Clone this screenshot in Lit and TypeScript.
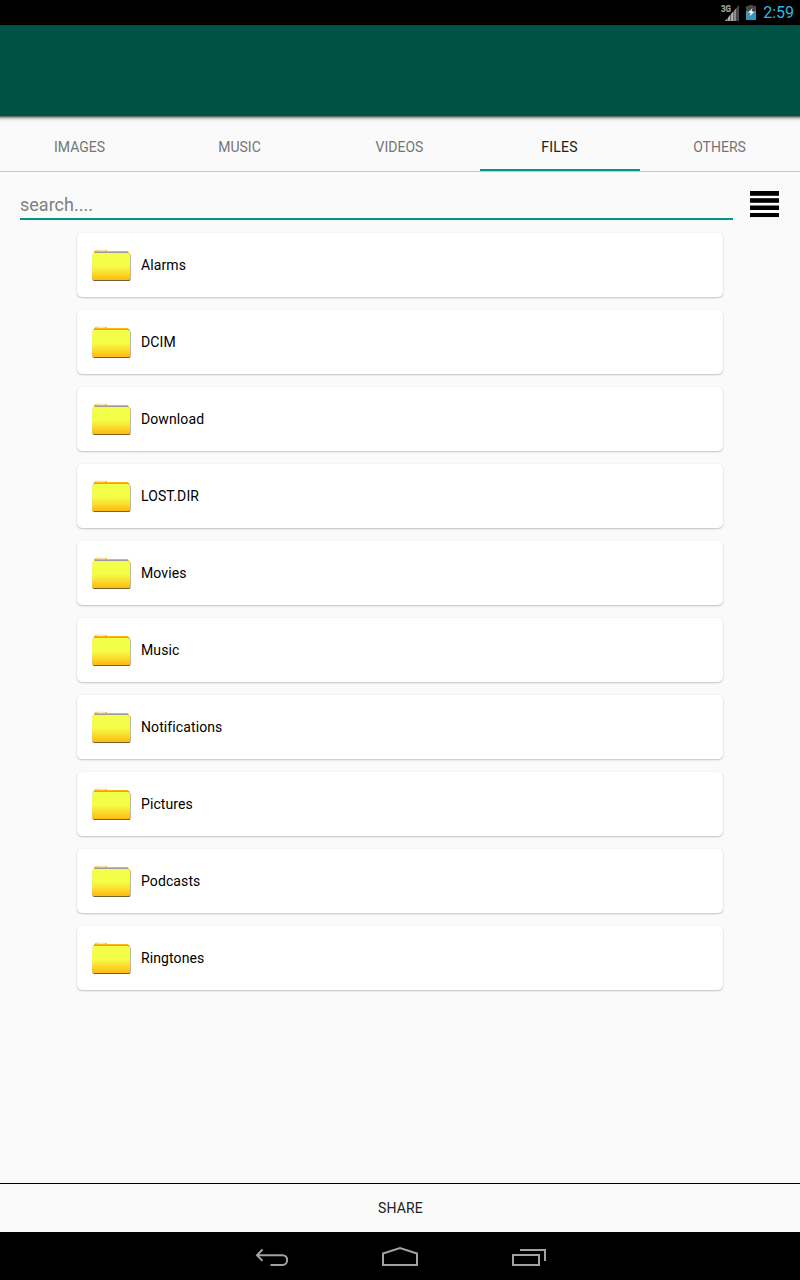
import { LitElement, html, css, svg } from "lit";
import { customElement, property, state } from "lit/decorators.js";

@customElement("folder-card")
class FolderCard extends LitElement {
  @property() name = "";
  @property({ type: Boolean }) warm = false;

  static styles = css`
    :host { display: block; }
    .card {
      display: flex; align-items: center; box-sizing: border-box;
      height: 64px; padding-left: 15px; border-radius: 5px; background: #fff;
      box-shadow: 0 1px 2px rgba(0, 0, 0, 0.22), 0 0 1px rgba(0, 0, 0, 0.1);
    }
    svg { display: block; flex: none; width: 40px; height: 34px; margin-top: 2px; }
    .name { margin-left: 9px; font-size: 14px; line-height: 20px; letter-spacing: 0.1px; color: #000; }
  `;

  render() {
    return html`<div class="card">
      <svg viewBox="0 0 40 34">
        <defs>
          <linearGradient id="body" x1="0" y1="0" x2="0" y2="1">
            <stop offset="0" stop-color="#f2ff48" />
            <stop offset="0.48" stop-color="#f4fd48" />
            <stop offset="0.72" stop-color="#fbe030" />
            <stop offset="1" stop-color="#ffb90f" />
          </linearGradient>
        </defs>
        <path d="M3 2V1h2V0.4h8V1h2v1z" fill="#fae8b4" />
        <path d="M3 1h2v1H3zM13 1h2v1h-2z" fill="#fbc33a" />
        <path d="M2 4V2h34l1 2z" fill="#fdb515" />
        ${this.warm
          ? svg`<path d="M2 3h35l1 1H1z" fill="#dfa03a" />`
          : svg`<path d="M3 3h33v1H3z" fill="#9c9a9c" />`}
        <path d="M2 4h35l2 2v24l-1 2H2l-2-1V6z" fill="#b9b6bd" />
        <path d="M1 30h37v1l-1 1H2l-1-1z" fill="#77622e" />
        <path d="M2 4h34l2 2v24l-1 1H1l-1-1V6z" fill="url(#body)" />
      </svg>
      <span class="name">${this.name}</span>
    </div>`;
  }
}

@customElement("app-root")
class AppRoot extends LitElement {
  @state() active = "FILES";
  tabs = ["IMAGES", "MUSIC", "VIDEOS", "FILES", "OTHERS"];
  folders = ["Alarms", "DCIM", "Download", "LOST.DIR", "Movies", "Music", "Notifications", "Pictures", "Podcasts", "Ringtones"];

  static styles = css`
    :host {
      display: flex; flex-direction: column; width: 800px; height: 1280px;
      overflow: hidden; background: #fafafa; font-family: Roboto, sans-serif;
    }
    svg { display: block; flex: none; }
    .status {
      display: flex; justify-content: flex-end; align-items: center; flex: none;
      height: 25px; box-sizing: border-box; padding-right: 6px; background: #000;
    }
    .battery { margin-left: 6px; }
    .clock { margin-left: 6px; font-size: 16px; line-height: 25px; color: #33b5e5; }
    .toolbar { flex: none; height: 91px; background: #005344; }
    .shade {
      flex: none; height: 6px;
      background: linear-gradient(#5f6f6b 0 1px, #9da5a3 1px 2px, #c9cccb 2px 3px, #e2e4e3 3px 4px, #f1f2f1 4px 5px, #f8f8f8 5px);
    }
    .tabs { display: flex; flex: none; height: 49px; border-bottom: 1px solid #c8c8c8; }
    .tab {
      flex: 1; box-sizing: border-box; height: 49px; padding-top: 15px;
      text-align: center; font-size: 14px; line-height: 20px; color: #757575;
      border-bottom: 2px solid transparent; padding-right: 1px;
    }
    .tab.on { color: #212121; border-bottom-color: #009688; letter-spacing: 0.25px; }
    .search { display: flex; flex: none; height: 61px; padding-left: 20px; }
    .field {
      box-sizing: border-box; width: 713px; height: 48px; padding-top: 21px;
      border-bottom: 2px solid #009688; font-size: 18px; line-height: 24px; color: #808080;
    }
    .lines { margin: 19px 0 0 17px; }
    .list { display: flex; flex-direction: column; gap: 13px; flex: 1; padding: 0 77px; }
    .share {
      flex: none; height: 48px; border-top: 1px solid #000; text-align: center;
      font-size: 14px; line-height: 49px; color: #212121; padding-left: 1px; letter-spacing: 0.15px;
    }
    .nav { display: flex; flex: none; height: 48px; justify-content: center; background: #000; }
  `;

  render() {
    return html`
      <div class="status">
        <svg width="20" height="18" viewBox="0 0 20 18">
          <text x="1" y="7.500" font-size="8.5" font-weight="700" textLength="10" lengthAdjust="spacingAndGlyphs" fill="#a8a8a8" stroke="#a8a8a8" stroke-width="0.2">3G</text>
          <path d="M19 1V17H5z" fill="#484848" />
          <path d="M5 17l2.300-2.600V17zM8 17v-3.500l2.300-2.600V17zM11 17v-7l2.300-2.600V17z" fill="#adadad" />
          <path d="M14 17V6.700l2-2.300V17z" fill="#8c8c8c" />
        </svg>
        <svg class="battery" width="11" height="17" viewBox="0 0 11 17">
          <path d="M3 1h4v1h3v5H0V2h3z" fill="#484848" />
          <path d="M0 7h10v9H0z" fill="#3595bb" />
          <path d="M6.500 4L2.300 8.500l2.500.6L3.500 12.500 7.900 8 5.500 7.300z" fill="#fff" />
        </svg>
        <span class="clock">2:59</span>
      </div>
      <div class="toolbar"></div>
      <div class="shade"></div>
      <div class="tabs">
        ${this.tabs.map((t) => html`<div class="tab ${t === this.active ? "on" : ""}" @click=${() => (this.active = t)}>${t}</div>`)}
      </div>
      <div class="search">
        <div class="field">search....</div>
        <svg class="lines" width="29" height="27" viewBox="0 0 29 27">
          <path d="M0 0h29v4H0zM0 8h29v3H0zM0 15h29v3H0zM0 22h29v4H0z" fill="#000" />
          <path d="M0 4h29v1H0zM0 7h29v1H0zM0 11h29v1H0z" fill="#333" />
          <path d="M0 14h29v1H0z" fill="#808080" />
          <path d="M0 18h29v1H0z" fill="#000" />
          <path d="M0 26h29v1H0z" fill="#eee" />
        </svg>
      </div>
      <div class="list">
        ${this.folders.map((f, i) => html`<folder-card .name=${f} .warm=${i % 2 === 1}></folder-card>`)}
      </div>
      <div class="share">SHARE</div>
      <div class="nav">
        <svg width="300" height="48" viewBox="250 1232 300 48" fill="none" stroke="#a2a2a2" stroke-width="2">
          <path d="M262.500 1249.500l-5.500 5.700 5.500 5.700M257.500 1255.200h25c6.200 0 6.200 9.800 0 9.800h-12" />
          <path d="M383 1265v-11.500l17-5.500 17 5.500v11.500z" />
          <path d="M513 1255h26v10h-26zM520 1250h25v11" />
        </svg>
      </div>
    `;
  }
}
